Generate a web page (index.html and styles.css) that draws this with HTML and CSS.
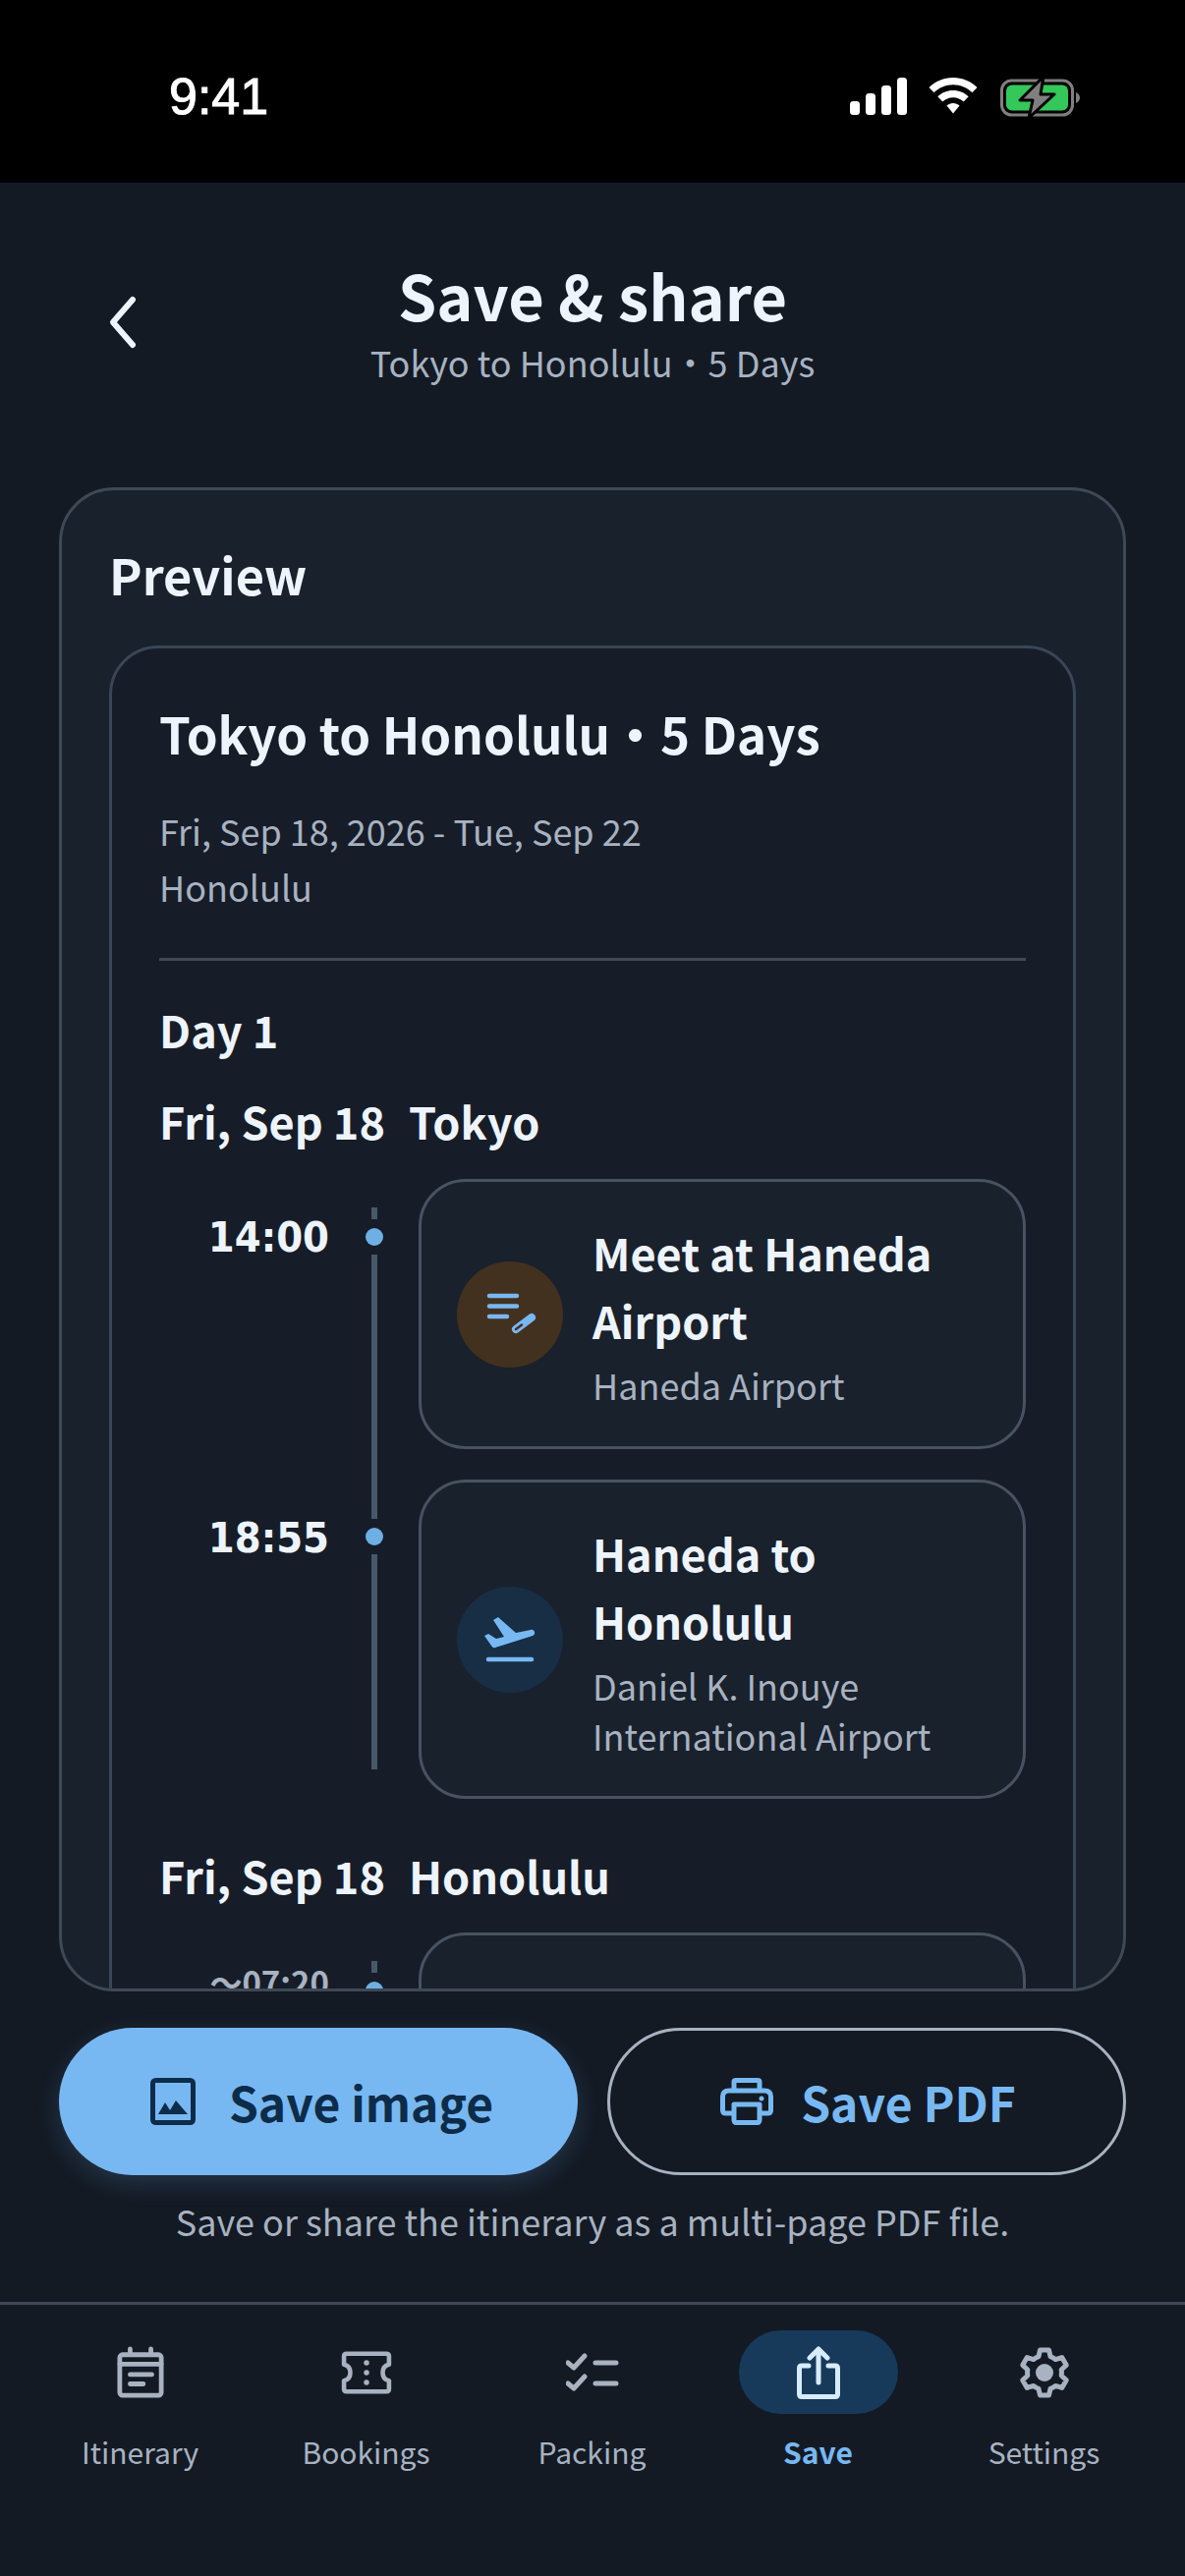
FILE: index.html
```html
<!DOCTYPE html>
<html lang="en">
<head>
<meta charset="utf-8">
<title>Save &amp; share</title>
<link rel="stylesheet" href="styles.css">
</head>
<body>
<div class="screen">
  <div class="status">
    <span class="clock">9:41</span>
    <div class="status-icons">
      <svg width="58" height="38" viewBox="0 0 58 38" class="ic-signal"><rect x="0" y="24" width="10" height="14" rx="3.5"/><rect x="16" y="16" width="10" height="22" rx="3.5"/><rect x="32" y="8" width="10" height="30" rx="3.5"/><rect x="48" y="0" width="10" height="38" rx="3.5"/></svg>
      <svg width="50" height="38" viewBox="0 0 50 38" class="ic-wifi"><path d="M25 0C15.500 0 7 3.700 0.500 10L5.500 15.300C10.500 10.400 17.300 7.300 25 7.300S39.500 10.400 44.500 15.300L49.500 10C43 3.700 34.500 0 25 0Z"/><path d="M25 13C18.800 13 13.300 15.400 9.300 19.300L14.300 24.500C17.100 21.900 20.800 20.300 25 20.300S32.900 21.900 35.700 24.500L40.700 19.300C36.700 15.400 31.200 13 25 13Z"/><path d="M25 26C22.500 26 20.300 26.900 18.500 28.500L25 36.500L31.500 28.500C29.700 26.900 27.500 26 25 26Z"/></svg>
      <svg width="82" height="42" viewBox="0 0 82 42" class="ic-batt"><rect x="1.500" y="4" width="72" height="35" rx="10" fill="none" stroke="#7f7f7f" stroke-width="3"/><rect x="6" y="8.500" width="63" height="26" rx="6" fill="#34c759"/><path d="M77 16C79.500 17 81 19 81 21.500S79.500 26 77 27Z" fill="#7f7f7f"/><path d="M44 0L20 24H33L29 42L55 18H41Z" fill="#7f7f7f" stroke="#000" stroke-width="3" stroke-linejoin="round"/></svg>
    </div>
  </div>

  <header class="top">
    <svg class="back" width="36" height="60" viewBox="0 0 36 60"><path d="M28 7L8 30L28 53" fill="none" stroke="#eef4fd" stroke-width="6" stroke-linecap="round" stroke-linejoin="round"/></svg>
    <h1 class="title">Save &amp; share</h1>
    <p class="subtitle">Tokyo to Honolulu・5 Days</p>
  </header>

  <section class="preview">
    <h2 class="preview-label">Preview</h2>
    <div class="sheet">
      <h3 class="sheet-title">Tokyo to Honolulu・5 Days</h3>
      <p class="sheet-meta">Fri, Sep 18, 2026 - Tue, Sep 22</p>
      <p class="sheet-meta">Honolulu</p>
      <hr class="rule">
      <div class="day">Day 1</div>
      <div class="date"><span>Fri, Sep 18</span><span>Tokyo</span></div>

      <div class="row row-first">
        <div class="time">14:00</div>
        <div class="rail"><i class="seg seg-top"></i><i class="dot"></i><i class="seg seg-fill"></i></div>
        <div class="event event-1">
          <span class="badge badge-note">
            <svg width="54" height="54" viewBox="0 0 54 54" fill="none"><path d="M6 8H34M6 18.500H34M6 29H24" stroke="#78b8f2" stroke-width="4.500" stroke-linecap="round"/><path d="M33 42L49 30" stroke="#78b8f2" stroke-width="8" stroke-linecap="round"/><path d="M33 42L39 37.500" stroke="#43311f" stroke-width="2.500" stroke-linecap="round"/></svg>
          </span>
          <div class="event-text">
            <div class="event-title">Meet at Haneda Airport</div>
            <div class="event-sub">Haneda Airport</div>
          </div>
        </div>
      </div>

      <div class="row row-second">
        <div class="time">18:55</div>
        <div class="rail"><i class="seg seg-second"></i><i class="dot"></i><i class="seg seg-fill"></i></div>
        <div class="event event-2">
          <span class="badge badge-flight">
            <svg width="54" height="54" viewBox="0 0 54 54" fill="none"><path d="M1 23L5 21L13 26L21 24L10 7L15 4L33 20L48 17C52 16 54 21 50 23L12 35C10 36 9 34.500 8 33Z" fill="#78b8f2"/><path d="M5 47H49" stroke="#78b8f2" stroke-width="4.500" stroke-linecap="round"/></svg>
          </span>
          <div class="event-text">
            <div class="event-title">Haneda to Honolulu</div>
            <div class="event-sub">Daniel K. Inouye International Airport</div>
          </div>
        </div>
      </div>

      <div class="date date-next"><span>Fri, Sep 18</span><span>Honolulu</span></div>
      <div class="row row-third">
        <div class="time time-third">～07:20</div>
        <div class="rail"><i class="seg seg-top"></i><i class="dot"></i><i class="seg seg-fill"></i></div>
        <div class="event event-3"></div>
      </div>
    </div>
  </section>

  <div class="actions">
    <button class="btn btn-primary">
      <svg width="46" height="48" viewBox="0 0 46 48" fill="none"><rect x="2.500" y="2.500" width="41" height="43" rx="3" stroke="#0d2c49" stroke-width="5"/><path d="M8 37L15 25L20 33L26 23L38 37Z" fill="#0d2c49"/></svg>
      <span>Save image</span>
    </button>
    <button class="btn btn-outline">
      <svg width="54" height="48" viewBox="0 0 54 48" fill="none" stroke="#78b8f2" stroke-width="5" stroke-linejoin="round"><path d="M14 13V4C14 3 15 2.500 16 2.500H38C39 2.500 40 3 40 4V13"/><path d="M14 36H6C4 36 2.500 35 2.500 33V19C2.500 15 5 13 9 13H45C49 13 51.500 15 51.500 19V33C51.500 35 50 36 48 36H40"/><path d="M14 27H40V43C40 44.500 39 45.500 38 45.500H16C15 45.500 14 44.500 14 43Z"/><circle cx="42" cy="21" r="1.500" fill="#78b8f2" stroke-width="2"/></svg>
      <span>Save PDF</span>
    </button>
  </div>
  <p class="note">Save or share the itinerary as a multi-page PDF file.</p>

  <nav class="tabs">
    <div class="tab">
      <span class="tab-icon">
        <svg width="48" height="54" viewBox="0 0 50 54" fill="none" stroke="#a8b2c0" stroke-width="5" stroke-linecap="round" stroke-linejoin="round"><rect x="3" y="8" width="44" height="43" rx="3"/><path d="M3 18H47M14 2V7M36 2V7M14 29H37M14 39H28"/></svg>
      </span>
      <span class="tab-label">Itinerary</span>
    </div>
    <div class="tab">
      <span class="tab-icon">
        <svg width="52" height="44" viewBox="0 0 56 48" fill="none"><path d="M6 3H50C52 3 53 4 53 6V15C48 16 46 20 46 24S48 32 53 33V42C53 44 52 45 50 45H6C4 45 3 44 3 42V33C8 32 10 28 10 24S8 16 3 15V6C3 4 4 3 6 3Z" stroke="#a8b2c0" stroke-width="5" stroke-linejoin="round"/><circle cx="28" cy="13" r="3" fill="#a8b2c0"/><circle cx="28" cy="24" r="3" fill="#a8b2c0"/><circle cx="28" cy="35" r="3" fill="#a8b2c0"/></svg>
      </span>
      <span class="tab-label">Bookings</span>
    </div>
    <div class="tab">
      <span class="tab-icon">
        <svg width="54" height="40" viewBox="0 0 54 40" fill="none" stroke="#a8b2c0" stroke-width="5" stroke-linecap="round" stroke-linejoin="round"><path d="M2 10L8 15L19 3M2 31L8 36L19 24M30 10H51M30 31H51"/></svg>
      </span>
      <span class="tab-label">Packing</span>
    </div>
    <div class="tab tab-on">
      <span class="tab-icon">
        <svg width="44" height="54" viewBox="0 0 44 54" fill="none" stroke="#d7ebff" stroke-width="5" stroke-linecap="round" stroke-linejoin="round"><path d="M12 20H5C3.500 20 2.500 21 2.500 22.500V49C2.500 50.500 3.500 51.500 5 51.500H39C40.500 51.500 41.500 50.500 41.500 49V22.500C41.500 21 40.500 20 39 20H32"/><path d="M22 37V4M13 12L22 3L31 12"/></svg>
      </span>
      <span class="tab-label">Save</span>
    </div>
    <div class="tab">
      <span class="tab-icon">
        <svg width="54" height="54" viewBox="0 0 54 54" fill="none"><path d="M21 10.600L22.500 3.930H31.500L33 10.600A17.500 17.500 0 0 1 38.200 13.600L44.730 11.570L49.230 19.370L44.200 24A17.500 17.500 0 0 1 44.200 30L49.230 34.630L44.730 42.430L38.200 40.400A17.500 17.500 0 0 1 33 43.400L31.500 50.070H22.500L21 43.400A17.500 17.500 0 0 1 15.800 40.400L9.270 42.430L4.770 34.630L9.800 30A17.500 17.500 0 0 1 9.800 24L4.770 19.370L9.270 11.570L15.800 13.600A17.500 17.500 0 0 1 21 10.600Z" stroke="#a8b2c0" stroke-width="5" stroke-linejoin="round"/><circle cx="27" cy="27" r="9" fill="#a8b2c0"/></svg>
      </span>
      <span class="tab-label">Settings</span>
    </div>
  </nav>
</div>
</body>
</html>
```

FILE: styles.css
```css
* { box-sizing: border-box; }
html, body { margin: 0; padding: 0; background: #131a24; }
body { font-family: "Noto Sans CJK JP", "Noto Sans", sans-serif; color: #eef4fd; }
.screen { width: 1206px; height: 2622px; display: flex; flex-direction: column; overflow: hidden; background: #131a24; }

.status { height: 186px; flex: none; background: #000; display: flex; align-items: flex-start; justify-content: space-between; padding: 67px 106px 0 172px; }
.clock { font-family: "Liberation Sans", Arial, sans-serif; font-size: 52px; line-height: 62px; color: #fff; -webkit-text-stroke: 1px #fff; }
.status-icons { display: flex; align-items: flex-start; margin-top: 12px; }
.ic-signal { fill: #fff; }
.ic-wifi { fill: #fff; margin-left: 22px; }
.ic-batt { margin-left: 23px; margin-top: -1px; }

.top { height: 310px; flex: none; position: relative; display: flex; flex-direction: column; align-items: center; padding-top: 76px; }
.back { position: absolute; left: 107px; top: 112px; }
.title { margin: 0; font-size: 63px; line-height: 76px; font-weight: 700; }
.subtitle { margin: 0; font-size: 36px; line-height: 50px; color: #a8b2c0; font-weight: 400; margin-top: 5px; }

.preview { margin: 0 60px; height: 1531px; flex: none; border: 3px solid #3f4956; border-radius: 56px; background: #19212c; padding: 53px 48px 0; overflow: hidden; }
.preview-label { margin: 0; font-size: 50.500px; line-height: 64px; font-weight: 700; }
.sheet { margin-top: 41px; height: 1700px; border: 3px solid #3a4655; border-radius: 50px; padding: 0 48px; background: #161d28; }
.sheet-title { margin: 48px 0 33px; font-size: 51px; line-height: 76px; font-weight: 700; }
.sheet-meta { margin: 0; font-size: 36px; line-height: 57px; color: #a8b2c0; }
.rule { border: 0; height: 3px; background: #3f4956; margin: 44px 0 0; }
.day { margin-top: 37px; font-size: 45px; line-height: 66px; font-weight: 700; }
.date { margin-top: 27px; font-size: 45px; line-height: 66px; font-weight: 700; display: flex; gap: 24px; }
.date-next { margin-top: 45px; }

.row { display: grid; grid-template-columns: 173px 91px 1fr; margin-top: 26px; }
.row-second { margin-top: 0; }
.row-third { margin-top: 25px; }
.time { text-align: right; font-family: "DejaVu Sans", sans-serif; font-stretch: condensed; font-size: 43px; line-height: 66px; font-weight: 700; padding-top: 26px; }
.time-third { font-family: "Noto Sans CJK JP", sans-serif; font-stretch: normal; font-size: 33px; line-height: 48px; padding-top: 26px; color: #a8b2c0; }
.rail { display: flex; flex-direction: column; align-items: center; }
.seg { display: block; width: 6px; background: #48586a; flex: none; }
.seg-top { height: 12px; margin-top: 29px; }
.seg-second { height: 40px; }
.seg-fill { flex: 1; }
.dot { display: block; width: 18px; height: 18px; border-radius: 50%; background: #6eb0e4; margin: 9px 0; flex: none; }

.event { border: 3px solid #48535f; border-radius: 48px; background: #19212c; display: flex; align-items: center; gap: 30px; padding: 0 36px; }
.event-1 { height: 275px; margin-bottom: 31px; }
.event-2 { height: 325px; }
.row-second .rail { padding-bottom: 30px; }
.event-3 { height: 200px; }
.badge { width: 108px; height: 108px; border-radius: 50%; flex: none; display: flex; align-items: center; justify-content: center; }
.badge-note { background: #43311f; }
.badge-flight { background: #172e45; }
.event-text { min-width: 0; }
.event-title { font-size: 45px; line-height: 69px; font-weight: 700; }
.event-sub { font-size: 36px; line-height: 51px; color: #a8b2c0; margin-top: 6px; }

.actions { display: flex; gap: 30px; margin: 37px 60px 0; flex: none; }
.btn { flex: 0 0 528px; height: 150px; border-radius: 75px; display: flex; align-items: center; justify-content: center; font-family: inherit; font-size: 48px; font-weight: 700; }
.btn-primary { background: #78b8f2; color: #0d2c49; border: 0; box-shadow: 0 8px 24px rgba(120, 184, 242, .18); gap: 34px; padding: 0 0 0 7px; }
.btn-outline { background: transparent; color: #78b8f2; border: 3px solid #a8b2c0; gap: 28px; padding: 0 0 0 3px; }
.note { margin: 22px 0 0; text-align: center; font-size: 36px; line-height: 48px; color: #a8b2c0; flex: none; }

.tabs { margin-top: 59px; flex: 1; border-top: 3px solid #3f4956; display: flex; padding: 26px 27.500px 0; }
.tab { width: 230px; display: flex; flex-direction: column; align-items: center; }
.tab-icon { width: 162px; height: 85px; border-radius: 43px; display: flex; align-items: center; justify-content: center; }
.tab-on .tab-icon { background: #173a5a; }
.tab-label { margin-top: 14px; font-size: 30px; line-height: 48px; color: #a8b2c0; }
.tab-on .tab-label { color: #78b8f2; font-weight: 700; }
```
